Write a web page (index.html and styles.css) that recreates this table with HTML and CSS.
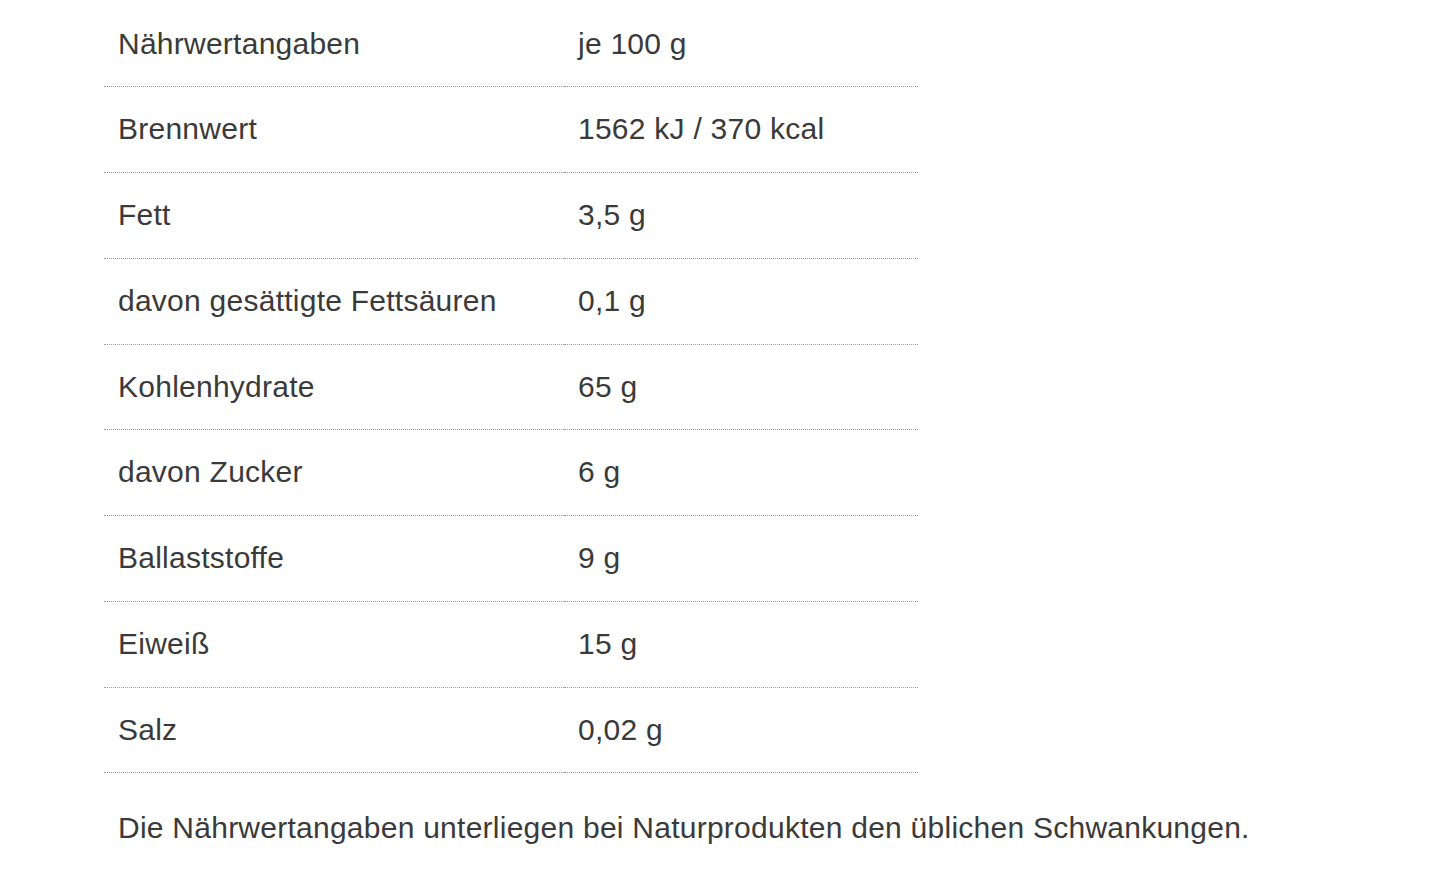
FILE: index.html
```html
<!DOCTYPE html>
<html lang="de">
<head>
<meta charset="utf-8">
<title>Nährwertangaben</title>
<link rel="stylesheet" href="styles.css">
</head>
<body>
<div class="wrap">
  <table class="nutri">
    <tbody>
      <tr><td>Nährwertangaben</td><td>je 100 g</td></tr>
      <tr><td>Brennwert</td><td>1562 kJ / 370 kcal</td></tr>
      <tr><td>Fett</td><td>3,5 g</td></tr>
      <tr><td>davon gesättigte Fettsäuren</td><td>0,1 g</td></tr>
      <tr><td>Kohlenhydrate</td><td>65 g</td></tr>
      <tr><td>davon Zucker</td><td>6 g</td></tr>
      <tr><td>Ballaststoffe</td><td>9 g</td></tr>
      <tr><td>Eiweiß</td><td>15 g</td></tr>
      <tr><td>Salz</td><td>0,02 g</td></tr>
    </tbody>
  </table>
  <p class="note">Die Nährwertangaben unterliegen bei Naturprodukten den üblichen Schwankungen.</p>
</div>
</body>
</html>
```

FILE: styles.css
```css
html, body {
  margin: 0;
  padding: 0;
  background: #fff;
}
body {
  font-family: "Liberation Sans", Arial, Helvetica, sans-serif;
  color: #3a3a3a;
  font-size: 30px;
  letter-spacing: 0.25px;
}
.wrap {
  padding: 1.5px 0 0 104px;
}
.nutri {
  border-collapse: collapse;
  table-layout: fixed;
  width: 814px;
}
.nutri td {
  padding: 19px 14px 20.75px;
  line-height: 45px;
  border-bottom: 1px dotted #9c9c9c;
  vertical-align: middle;
  text-align: left;
  white-space: nowrap;
}
.nutri td:first-child {
  width: 432px;
}
.note {
  margin: 32px 0 0;
  padding-left: 14px;
  line-height: 45px;
}
```
